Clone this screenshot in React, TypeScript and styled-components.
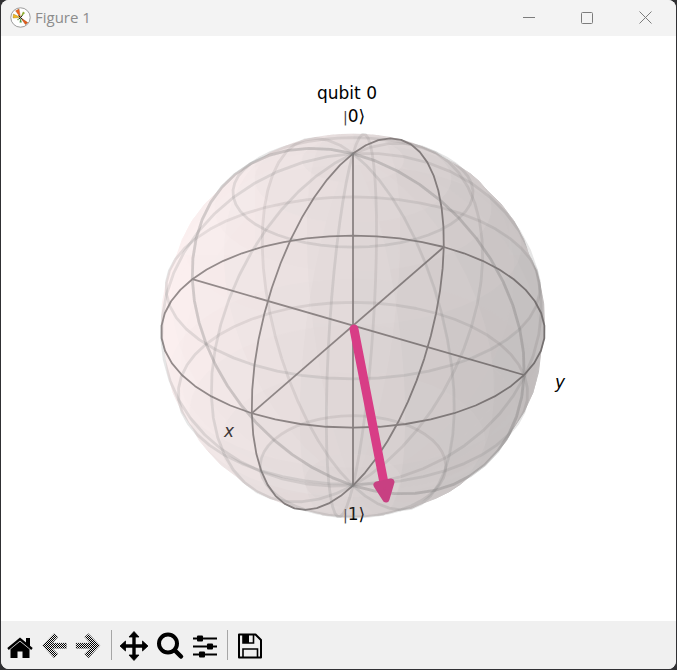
import React from "react";
import styled, { createGlobalStyle } from "styled-components";

const GlobalStyle = createGlobalStyle`
  * { box-sizing: border-box; }
  html, body, #root { height: 100%; }
  body { margin: 0; background: #303033; }
`;

const Desktop = styled.div`
  height: 100%;
  padding: 0 1px 1px;
`;

const Window = styled.main`
  display: flex;
  flex-direction: column;
  height: 100%;
  overflow: hidden;
  border-radius: 8px;
  background: #fff;
`;

const TitleBar = styled.header`
  display: flex;
  align-items: center;
  height: 36px;
  flex: none;
  padding: 0 2px 2px 9px;
  background: #f3f3f3;
`;

const Title = styled.h1`
  flex: 1;
  margin: 0 0 0 4px;
  color: #8c8c8c;
  font: 400 15px/20px "Open Sans", "Noto Sans", sans-serif;
`;

const CaptionButton = styled.button`
  display: grid;
  place-items: center;
  width: 58px;
  height: 100%;
  padding: 0;
  border: 0;
  background: transparent;
  color: #7c7c7c;
`;

const Canvas = styled.section`
  flex: 1;
  min-height: 0;
  background: #fff;
`;

const Plot = styled.svg`
  display: block;
  width: 100%;
  height: 100%;
`;

const Label = styled.text<{ $italic?: boolean }>`
  font-family: "DejaVu Sans", sans-serif;
  font-size: 17px;
  font-style: ${(p) => (p.$italic ? "italic" : "normal")};
  text-anchor: middle;
`;

const KetBar = styled.tspan`
  fill: #444;
  font-size: 14px;
`;

const Toolbar = styled.nav`
  display: flex;
  align-items: center;
  height: 48px;
  flex: none;
  background: #f0f0f0;
`;

const ToolButton = styled.button`
  width: 35px;
  height: 34px;
  padding: 0;
  border: 0;
  background: transparent;
  color: #000;
`;

const ToolIcon = styled.svg`
  display: block;
  width: 35px;
  height: 34px;
`;

const Separator = styled.span`
  width: 1px;
  height: 30px;
  margin: 0 5px;
  background: #a6a6a6;
`;

/* ---- Bloch sphere geometry ---- */

type Vec = [number, number, number];
type Face = { points: string; color: string; front: boolean };

const CX = 352;
const CY = 289.6;
const SCALE = 191.4;
const DISTANCE = 13.8;
const RIGHT: Vec = [0.866, 0.5, 0];
const UP: Vec = [-0.25, 0.433, 0.866];
const EYE: Vec = [0.433, -0.75, 0.5];
const LIGHT: Vec = [-0.667, -0.667, 0.333];

const dot = (a: Vec, b: Vec) => a[0] * b[0] + a[1] * b[1] + a[2] * b[2];
const rad = (deg: number) => (deg * Math.PI) / 180;

const onSphere = (u: number, v: number): Vec => [
  Math.cos(rad(u)) * Math.sin(rad(v)),
  Math.sin(rad(u)) * Math.sin(rad(v)),
  Math.cos(rad(v)),
];

const project = (p: Vec) => {
  const k = SCALE / (1 - dot(p, EYE) / DISTANCE);
  return `${(CX + dot(p, RIGHT) * k).toFixed(2)},${(CY - dot(p, UP) * k).toFixed(2)}`;
};

const range = (from: number, to: number, step: number) => {
  const out: number[] = [];
  for (let n = from; n <= to + 0.001; n += step) out.push(n);
  return out;
};

const meridian = (u: number) => range(0, 180, 7.5).map((v) => project(onSphere(u, v))).join(" ");
const parallel = (v: number, from: number) =>
  range(from, from + 180, 7.5).map((u) => project(onSphere(u, v))).join(" ");

const faces: Face[] = [];
for (const u of range(-180, 165, 15)) {
  for (const v of range(0, 165, 15)) {
    const ring: [number, number][] = [
      [u, v], [u + 7.5, v], [u + 15, v], [u + 15, v + 7.5],
      [u + 15, v + 15], [u + 7.5, v + 15], [u, v + 15], [u, v + 7.5],
    ];
    const normal = onSphere(u + 7.5, v + 7.5);
    const shade = 0.65 + 0.35 * dot(normal, LIGHT);
    const c = (n: number) => Math.round(n * shade);
    faces.push({
      points: ring.map(([a, b]) => project(onSphere(a, b))).join(" "),
      color: `rgb(${c(255)},${c(221)},${c(221)})`,
      front: dot(normal, EYE) > 0.07,
    });
  }
}

const wires = (start: number) => [
  ...[0, 37.5, 75, 112.5, 150, 180].map((d) => meridian(start + d)),
  ...[37.5, 75, 112.5, 150].map((v) => parallel(v, start)),
];

function Shell({ front }: { front: boolean }) {
  return (
    <g opacity={0.2}>
      {faces.filter((f) => f.front === front).map((f) => (
        <polygon key={f.points} points={f.points} fill={f.color} stroke={f.color} strokeWidth={1} strokeLinejoin="round" />
      ))}
    </g>
  );
}

function Wireframe({ start }: { start: number }) {
  return (
    <g fill="none" stroke="#808080" strokeWidth={2.8} strokeOpacity={0.2} strokeLinejoin="round">
      {wires(start).map((w) => <polyline key={w} points={w} />)}
    </g>
  );
}

const axes: [Vec, Vec][] = [
  [[-1, 0, 0], [1, 0, 0]],
  [[0, -1, 0], [0, 1, 0]],
  [[0, 0, -1], [0, 0, 1]],
];

function BlochSphere() {
  return (
    <Plot viewBox="0 0 675 585" role="img" aria-label="Bloch sphere of qubit 0">
      <Shell front={false} />
      <Wireframe start={0} />
      <g fill="none" stroke="#7b7878" strokeWidth={1.8} strokeLinejoin="round">
        {axes.map(([a, b]) => (
          <polyline key={project(a)} points={`${project(a)} ${project(b)}`} />
        ))}
        <polyline points={parallel(90, -180)} />
        <polyline points={parallel(90, 0)} />
        <polyline points={meridian(-90)} />
        <polyline points={meridian(90)} />
      </g>
      <Label $italic x={228} y={401} fill="#111">x</Label>
      <Label x={353} y={484}><KetBar>|</KetBar>1⟩</Label>
      <Shell front />
      <Wireframe start={-180} />
      <path d="M353 293 383 447" stroke="#d83d86" strokeWidth={9} strokeLinecap="round" />
      <path d="M376 449 390 446 385 463Z" fill="#c84082" stroke="#c84082" strokeWidth={7} strokeLinejoin="round" />
      <Label x={346} y={63}>qubit 0</Label>
      <Label x={353} y={86}><KetBar>|</KetBar>0⟩</Label>
      <Label $italic x={559} y={352}>y</Label>
    </Plot>
  );
}

/* ---- Icons ---- */

function AppIcon() {
  return (
    <svg width="21" height="21" viewBox="0 0 21 21" aria-hidden="true">
      <circle cx="10.5" cy="10.5" r="9.7" fill="#fff" stroke="#858585" strokeWidth=".8" />
      <path d="M10.5 10.5 5.6 3.8 9 2Z" fill="#f4631b" stroke="#93501f" strokeWidth=".4" />
      <path d="M10.500 10.500 3 11 3.400 7Z" fill="#f3b820" stroke="#8d7721" strokeWidth=".4" />
      <path d="M10.500 10.500 17.700 15.600 15.500 17.600Z" fill="#e95817" stroke="#93501f" strokeWidth=".5" />
      <path d="M10.500 10.500 13 4.500 15 6Z" fill="#8fae32" />
      <path d="M10.500 10.500 9.500 15.500 11.800 15.500Z" fill="#4c9b47" />
      <path d="M10.500 10.500 7 12.500 8 13.500Z" fill="#78a950" />
      <path d="m8.500 8.500 4 4m0-4-3.500 3.500" stroke="#252b25" strokeWidth="1" />
    </svg>
  );
}

function HomeIcon() {
  return (
    <ToolIcon viewBox="0 0 35 34">
      <path d="m7 21 12-10 12 10" fill="none" stroke="currentColor" strokeWidth="2.3" />
      <path d="M25 10h4v9l-4-3.4ZM9.5 21.3 19 13.5l9.5 7.8V30H21.5v-6.5h-5V30h-7Z" fill="currentColor" />
    </ToolIcon>
  );
}

function HistoryIcon({ direction }: { direction: "back" | "forward" }) {
  const id = `dither-${direction}`;
  const d =
    direction === "back"
      ? "M6.5 17.5 18 5.5 22 9 16.5 15H30.5V20.5H16.5L22 26 18 30Z"
      : "M29 17.5 17.5 5.5 13.5 9 19 15H5V20.5H19L13.5 26 17.5 30Z";
  return (
    <ToolIcon viewBox="0 0 35 34">
      <defs>
        <pattern id={id} width="2" height="2" patternUnits="userSpaceOnUse">
          <path d="M0 0h1v1H0zM1 1h1v1H1z" fill="#000" />
        </pattern>
      </defs>
      <path d={d} fill={`url(#${id})`} stroke="#8a8a8a" strokeOpacity=".4" strokeWidth=".7" strokeLinejoin="round" />
    </ToolIcon>
  );
}

function PanIcon() {
  return (
    <ToolIcon viewBox="0 0 35 34">
      <path d="M17 7v22M6 18h22" stroke="currentColor" strokeWidth="3.4" />
      <path d="m17 3.5 5 5.5H12ZM17 32.500 12 27h10ZM3 18l5.500-5v10ZM31 18l-5.500-5v10Z" fill="currentColor" stroke="currentColor" strokeWidth=".8" strokeLinejoin="round" />
    </ToolIcon>
  );
}

function ZoomIcon() {
  return (
    <ToolIcon viewBox="0 0 35 34">
      <circle cx="16" cy="15.500" r="9" fill="none" stroke="currentColor" strokeWidth="4" />
      <path d="m23 22.500 6 6" stroke="currentColor" strokeWidth="4.500" strokeLinecap="round" />
    </ToolIcon>
  );
}

function SubplotsIcon() {
  return (
    <ToolIcon viewBox="0 0 35 34">
      <path d="M6 10.500h24M6 18.500h24M6 26.500h24" stroke="currentColor" strokeWidth="2" />
      <g fill="currentColor">
        <rect x="10" y="7.500" width="6" height="6" rx="1" />
        <rect x="20" y="15.500" width="6" height="6" rx="1" />
        <rect x="12" y="23.500" width="6" height="6" rx="1" />
      </g>
    </ToolIcon>
  );
}

function SaveIcon() {
  return (
    <ToolIcon viewBox="0 0 35 34">
      <path d="M6 6.500h16.500l5.500 5.500v17.500H6Z" fill="none" stroke="currentColor" strokeWidth="2" strokeLinejoin="round" />
      <path d="M10 29v-8h14.500v8M10 6.500v8.500h10.500V6.500" fill="none" stroke="currentColor" strokeWidth="1.600" />
      <path d="M10 6.500h6v8.500h-6z" fill="currentColor" />
    </ToolIcon>
  );
}

const toolGroups = [
  [
    { name: "Home", icon: <HomeIcon /> },
    { name: "Back", icon: <HistoryIcon direction="back" />, disabled: true },
    { name: "Forward", icon: <HistoryIcon direction="forward" />, disabled: true },
  ],
  [
    { name: "Pan", icon: <PanIcon /> },
    { name: "Zoom", icon: <ZoomIcon /> },
    { name: "Subplots", icon: <SubplotsIcon /> },
  ],
  [{ name: "Save", icon: <SaveIcon /> }],
];

const captions = [
  { name: "Minimize", d: "M0 6.5h12" },
  { name: "Maximize", d: "M1.500 1.500h9a1 1 0 0 1 1 1v9a1 1 0 0 1-1 1h-9a1 1 0 0 1-1-1v-9a1 1 0 0 1 1-1Z" },
  { name: "Close", d: "m.500.500 12 12m0-12-12 12" },
];

export default function App() {
  return (
    <Desktop>
      <GlobalStyle />
      <Window>
        <TitleBar>
          <AppIcon />
          <Title>Figure 1</Title>
          {captions.map((c) => (
            <CaptionButton key={c.name} type="button" aria-label={c.name}>
              <svg width="13" height="13" viewBox="0 0 13 13" fill="none" stroke="currentColor">
                <path d={c.d} />
              </svg>
            </CaptionButton>
          ))}
        </TitleBar>
        <Canvas>
          <BlochSphere />
        </Canvas>
        <Toolbar>
          {toolGroups.map((group, i) => (
            <React.Fragment key={group[0].name}>
              {i > 0 && <Separator />}
              {group.map((tool) => (
                <ToolButton key={tool.name} type="button" aria-label={tool.name} disabled={"disabled" in tool}>
                  {tool.icon}
                </ToolButton>
              ))}
            </React.Fragment>
          ))}
        </Toolbar>
      </Window>
    </Desktop>
  );
}
